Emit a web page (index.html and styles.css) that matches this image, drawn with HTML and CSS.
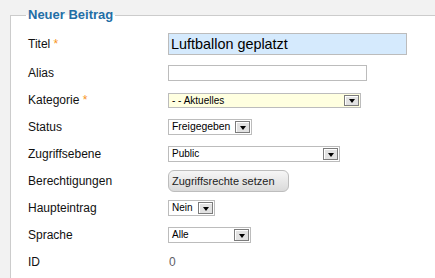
FILE: index.html
```html
<!DOCTYPE html>
<html lang="de">
<head>
<meta charset="utf-8">
<title>Neuer Beitrag</title>
<link rel="stylesheet" href="styles.css">
</head>
<body>
<fieldset class="panel">
  <legend class="panel-title">Neuer Beitrag</legend>
  <div class="row row-title">
    <div class="lbl">Titel <span class="req">*</span></div>
    <div class="field field-title">Luftballon geplatzt</div>
  </div>
  <div class="row row-alias">
    <div class="lbl">Alias</div>
    <div class="field field-alias"></div>
  </div>
  <div class="row row-kat">
    <div class="lbl">Kategorie <span class="req">*</span></div>
    <div class="select select-kat"><span>- - Aktuelles</span><span class="arrow"></span></div>
  </div>
  <div class="row">
    <div class="lbl">Status</div>
    <div class="select select-status"><span>Freigegeben</span><span class="arrow"></span></div>
  </div>
  <div class="row">
    <div class="lbl">Zugriffsebene</div>
    <div class="select select-access"><span>Public</span><span class="arrow"></span></div>
  </div>
  <div class="row">
    <div class="lbl">Berechtigungen</div>
    <button class="btn" type="button">Zugriffsrechte setzen</button>
  </div>
  <div class="row">
    <div class="lbl">Haupteintrag</div>
    <div class="select select-main"><span>Nein</span><span class="arrow"></span></div>
  </div>
  <div class="row">
    <div class="lbl">Sprache</div>
    <div class="select select-lang"><span>Alle</span><span class="arrow"></span></div>
  </div>
  <div class="row">
    <div class="lbl">ID</div>
    <div class="value">0</div>
  </div>
</fieldset>
</body>
</html>
```

FILE: styles.css
```css
html, body {
  margin: 0;
  padding: 0;
  background: #f2f2f2;
  overflow: hidden;
}

body {
  padding-left: 10px;
  font-family: "Liberation Sans", Arial, sans-serif;
  font-size: 12px;
  color: #111;
}

.panel {
  box-sizing: border-box;
  margin: 7px 0 0 0;
  padding: 7px 0 0 15px;
  width: 425px;
  height: 271px;
  border: 1px solid #cccccc;
  border-right: 0;
  border-bottom: 0;
  background: #ffffff;
}

.panel-title {
  padding: 0 2px;
  font-size: 13px;
  font-weight: bold;
  line-height: 16px;
  color: #1f6ea6;
}

.row {
  display: flex;
  align-items: center;
  height: 27px;
}

.row-title { height: 28px; }
.row-alias { height: 29px; }
.row-kat { height: 26px; }

.lbl {
  width: 140px;
  margin-left: 2px;
  flex-shrink: 0;
}

.req {
  color: #f7941d;
}

.field {
  box-sizing: border-box;
  border: 1px solid #bcbcbc;
  background: #fff;
}

.field-title {
  width: 239px;
  height: 22px;
  padding-left: 2px;
  background: #d5eafd;
  font-size: 14.4px;
  line-height: 20px;
  color: #000;
}

.field-alias {
  width: 199px;
  height: 16px;
}

.select {
  box-sizing: border-box;
  display: flex;
  align-items: center;
  justify-content: space-between;
  height: 16px;
  padding: 0 1px 0 3px;
  border: 1px solid #bcbcbc;
  background: #fff;
  font-size: 10px;
  color: #000;
}

.select-kat { width: 193px; height: 15px; background: #ffffe0; }
.select-status { width: 84px; font-size: 10.4px; }
.select-access { width: 172px; }
.select-main { width: 47px; }
.select-lang { width: 83px; }

.arrow {
  box-sizing: border-box;
  display: flex;
  align-items: center;
  justify-content: center;
  width: 15px;
  height: 12px;
  padding-top: 2px;
  border: 1px solid #7c7c7c;
  box-shadow: inset 1px 1px 0 #ffffff;
  background: #e2e2e2;
}

.select-kat .arrow { height: 11px; }

.arrow::after {
  content: "";
  border-left: 3.5px solid transparent;
  border-right: 3.5px solid transparent;
  border-top: 4px solid #000;
}

.btn {
  box-sizing: border-box;
  width: 121px;
  height: 22px;
  margin: 0;
  padding: 0 0 0 3px;
  border: 1px solid #bdbdbd;
  border-radius: 6px;
  background: linear-gradient(#f6f6f6, #dadada);
  font-family: "Liberation Sans", Arial, sans-serif;
  font-size: 11px;
  color: #222;
  text-align: left;
}

.value {
  padding-left: 1px;
  color: #5f6066;
}
```
